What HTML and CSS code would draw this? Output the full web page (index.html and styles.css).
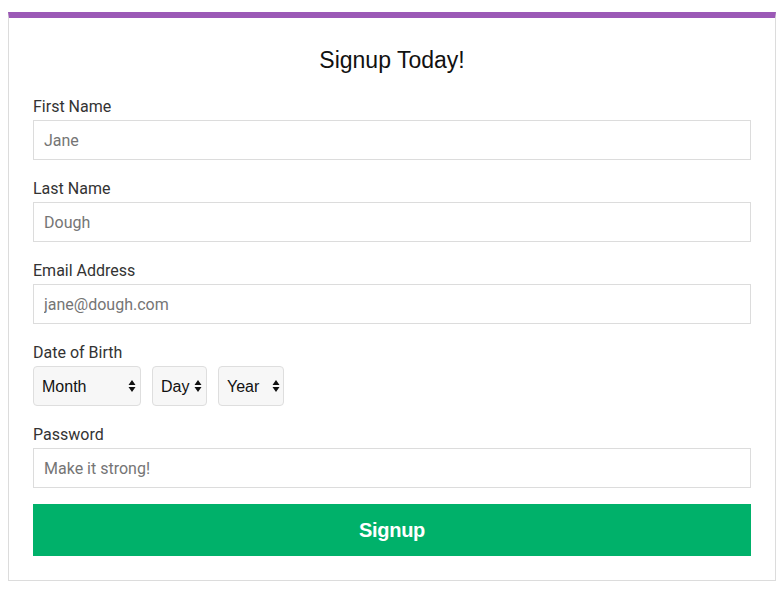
FILE: index.html
```html
<!DOCTYPE html>
<html>
<head>
<meta charset="utf-8">
<link rel="stylesheet" href="styles.css">
</head>
<body>
<form class="card">
  <h1 class="title">Signup Today!</h1>
  <div class="field">
    <label class="label">First Name</label>
    <input class="input" type="text" placeholder="Jane">
  </div>
  <div class="field">
    <label class="label">Last Name</label>
    <input class="input" type="text" placeholder="Dough">
  </div>
  <div class="field">
    <label class="label">Email Address</label>
    <input class="input" type="text" placeholder="jane@dough.com">
  </div>
  <div class="field">
    <label class="label">Date of Birth</label>
    <div class="selects">
      <span class="sel sel-month"><select><option>Month</option></select><svg class="arrows" width="8" height="14" viewBox="0 0 8 14"><path d="M4 1 L7.5 6 L0.5 6 Z M4 13 L0.5 8 L7.5 8 Z" fill="#111"/></svg></span>
      <span class="sel sel-day"><select><option>Day</option></select><svg class="arrows" width="8" height="14" viewBox="0 0 8 14"><path d="M4 1 L7.5 6 L0.5 6 Z M4 13 L0.5 8 L7.5 8 Z" fill="#111"/></svg></span>
      <span class="sel sel-year"><select><option>Year</option></select><svg class="arrows" width="8" height="14" viewBox="0 0 8 14"><path d="M4 1 L7.5 6 L0.5 6 Z M4 13 L0.5 8 L7.5 8 Z" fill="#111"/></svg></span>
    </div>
  </div>
  <div class="field field-last">
    <label class="label">Password</label>
    <input class="input" type="password" placeholder="Make it strong!">
  </div>
  <button class="btn" type="button">Signup</button>
</form>
</body>
</html>
```
FILE: styles.css
```css
html, body {
  margin: 0;
  padding: 0;
  background: #fff;
}
body {
  padding: 12px 8px 0 8px;
  font-family: Roboto, "Liberation Sans", sans-serif;
}
.card {
  display: block;
  box-sizing: border-box;
  width: 768px;
  height: 569px;
  margin: 0;
  border: 1px solid #dcdcdc;
  border-top: 6px solid #9b59b6;
  padding: 23px 24px 24px 24px;
}
.title {
  margin: 0 0 17px 0;
  font-family: "Liberation Sans", Arial, sans-serif;
  font-weight: 400;
  font-size: 23px;
  line-height: 38px;
  text-align: center;
  color: #111;
}
.field {
  margin-bottom: 18px;
}
.field-last {
  margin-bottom: 16px;
}
.label {
  display: block;
  font-size: 16px;
  line-height: 20px;
  color: #333;
  padding-top: 1px;
  margin-bottom: 3px;
}
.input {
  display: block;
  box-sizing: border-box;
  width: 100%;
  height: 40px;
  margin: 0;
  border: 1px solid #dcdcdc;
  border-radius: 0;
  padding: 0 10px;
  font-family: Roboto, "Liberation Sans", sans-serif;
  font-size: 16px;
  color: #333;
  outline: none;
}
.input::placeholder {
  color: #757575;
}
.selects {
  display: flex;
  gap: 11px;
}
.sel {
  position: relative;
  display: block;
}
.sel select {
  appearance: none;
  -webkit-appearance: none;
  box-sizing: border-box;
  height: 40px;
  margin: 0;
  border: 1px solid #dedede;
  border-radius: 4px;
  background: #f7f7f7;
  font-family: "Liberation Sans", Arial, sans-serif;
  font-size: 16px;
  color: #111;
  padding: 0 0 0 8px;
  outline: none;
}
.sel-month select { width: 108px; }
.sel-day select { width: 55px; }
.sel-year select { width: 66px; }
.arrows {
  position: absolute;
  top: 13px;
  pointer-events: none;
}
.sel-month .arrows { left: 95px; }
.sel-day .arrows { left: 42px; }
.sel-year .arrows { left: 54px; }
.btn {
  display: block;
  width: 100%;
  height: 52px;
  margin: 0;
  border: none;
  background: #00b16a;
  color: #fff;
  font-family: "Liberation Sans", Arial, sans-serif;
  font-weight: 700;
  font-size: 20px;
  letter-spacing: -0.3px;
  cursor: pointer;
}
```
